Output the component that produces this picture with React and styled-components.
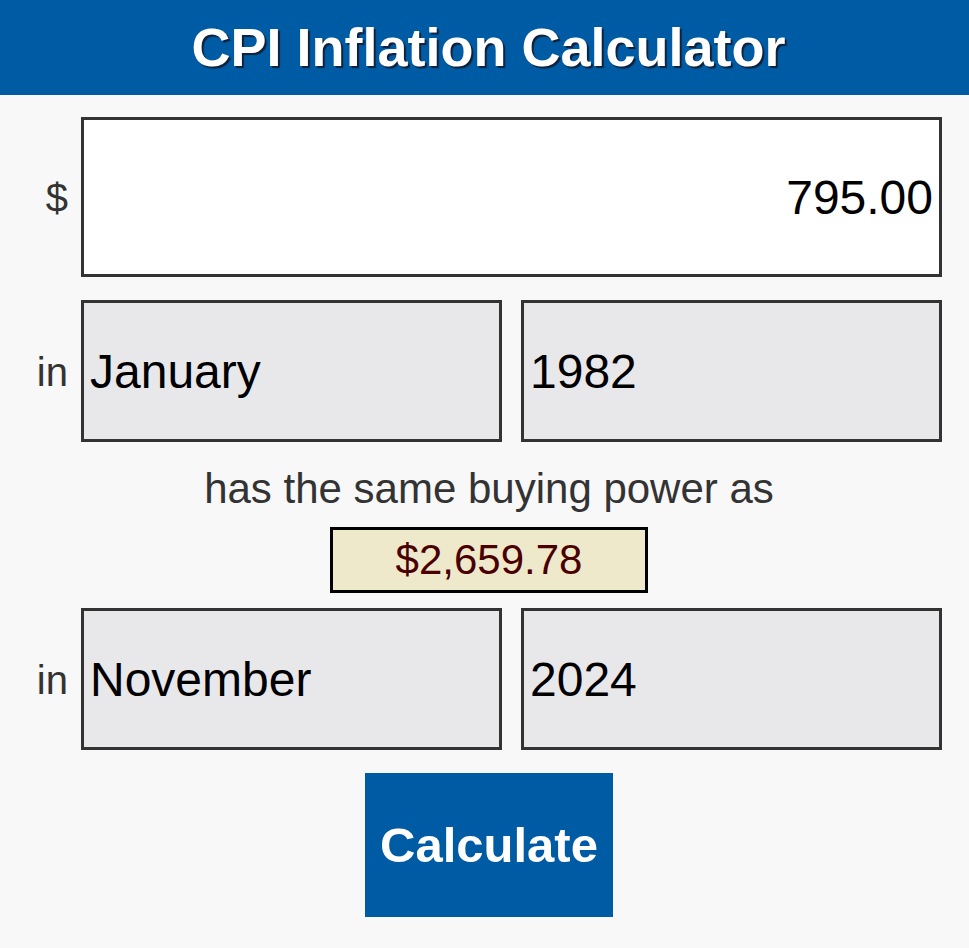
import React from 'react';
import styled, { createGlobalStyle } from 'styled-components';

const Global = createGlobalStyle`
  html, body {
    margin: 0;
    padding: 0;
    background: #f8f8f8;
    font-family: "Liberation Sans", Arial, sans-serif;
  }
`

const Header = styled.header`
  height: 95px;
  background: #005ba5;
  display: flex;
  align-items: center;
  justify-content: center;
`

const Title = styled.h1`
  margin: 0 0 0 8px;
  color: #fff;
  font-size: 54px;
  font-weight: bold;
  text-shadow: 2px 2px 1px #10213a;
  padding-bottom: 2px;
`

const Form = styled.div`
  display: flex;
  flex-direction: column;
  align-items: stretch;
  padding: 22px 27px 31px 0;
`

const Row = styled.div`
  display: flex;
  align-items: center;
  margin-top: ${props => props.top || 0}px;
`

const Label = styled.label`
  width: 68px;
  flex: none;
  margin-right: 13px;
  text-align: right;
  font-size: 40px;
  color: #333;
  padding-top: 3px;
`

const Fields = styled.div`
  flex: 1;
  display: grid;
  grid-template-columns: 1fr 1fr;
  column-gap: 19px;
`

const Amount = styled.input`
  flex: 1;
  box-sizing: border-box;
  height: 160px;
  border: 3px solid #333;
  background: #fff;
  font-family: inherit;
  font-size: 48px;
  color: #000;
  text-align: right;
  padding: 0 6px;
  outline: none;
`

const Select = styled.select`
  appearance: none;
  box-sizing: border-box;
  height: 142px;
  width: 100%;
  border: 3px solid #333;
  border-radius: 0;
  background: #e8e8ea;
  font-family: inherit;
  font-size: 48px;
  color: #000;
  padding: 0 6px;
  outline: none;
`

const Sentence = styled.div`
  margin-top: 23px;
  text-align: center;
  font-size: 42px;
  color: #333;
  padding-left: 36px;
`

const Result = styled.div`
  align-self: center;
  margin: 14px 0 0 36px;
  box-sizing: border-box;
  width: 318px;
  height: 66px;
  border: 3px solid #000;
  background: #efe9cc;
  color: #4a0000;
  font-size: 42px;
  display: flex;
  align-items: center;
  justify-content: center;
`

const Button = styled.button`
  align-self: center;
  margin: 23px 0 0 36px;
  width: 248px;
  height: 144px;
  border: none;
  border-radius: 0;
  background: #005ba5;
  color: #fff;
  font-family: inherit;
  font-weight: bold;
  font-size: 49px;
  padding: 0;
`

const months = ['January','February','March','April','May','June','July','August','September','October','November','December']

const App = () => {
    const [amount, setAmount] = React.useState('795.00')
    const [fromMonth, setFromMonth] = React.useState('January')
    const [fromYear, setFromYear] = React.useState('1982')
    const [toMonth, setToMonth] = React.useState('November')
    const [toYear, setToYear] = React.useState('2024')

    const years = []
    for (let y = 2024; y >= 1913; y--) years.push(String(y))

    return(
        <>
        <Global/>
        <Header>
            <Title>CPI Inflation Calculator</Title>
        </Header>
        <Form>
            <Row>
                <Label>$</Label>
                <Amount value={amount} onChange={e => setAmount(e.target.value)}/>
            </Row>
            <Row top={23}>
                <Label>in</Label>
                <Fields>
                    <Select value={fromMonth} onChange={e => setFromMonth(e.target.value)}>
                        {months.map(m => <option key={m}>{m}</option>)}
                    </Select>
                    <Select value={fromYear} onChange={e => setFromYear(e.target.value)}>
                        {years.map(y => <option key={y}>{y}</option>)}
                    </Select>
                </Fields>
            </Row>
            <Sentence>has the same buying power as</Sentence>
            <Result>$2,659.78</Result>
            <Row top={15}>
                <Label>in</Label>
                <Fields>
                    <Select value={toMonth} onChange={e => setToMonth(e.target.value)}>
                        {months.map(m => <option key={m}>{m}</option>)}
                    </Select>
                    <Select value={toYear} onChange={e => setToYear(e.target.value)}>
                        {years.map(y => <option key={y}>{y}</option>)}
                    </Select>
                </Fields>
            </Row>
            <Button>Calculate</Button>
        </Form>
        </>
    )
}

export default App;
